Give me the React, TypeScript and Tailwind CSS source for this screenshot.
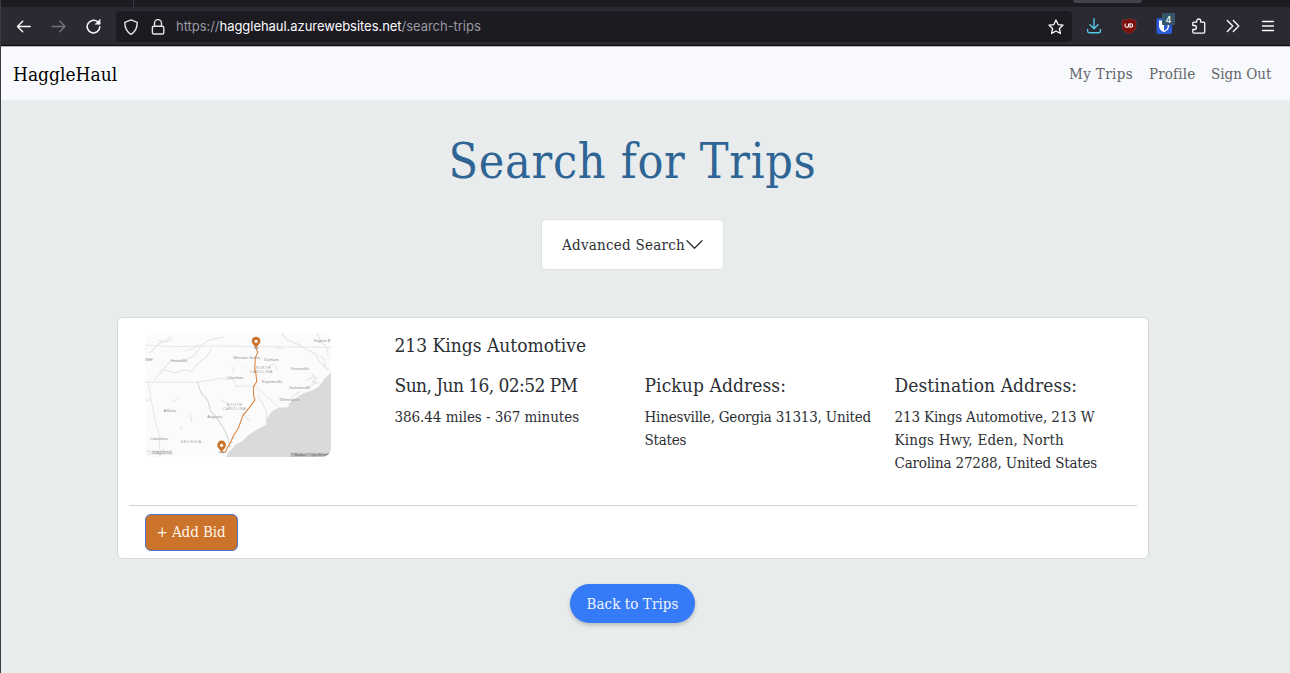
import type { ReactNode } from 'react';

function BrowserBar() {
  return (
    <header className="h-[47px] shrink-0 bg-[#2b2a33] font-['Inter','Liberation_Sans',sans-serif]">
      <div className="flex h-[7px] bg-[#1c1b22]">
        <div className="w-[133px] border-r border-[#3a3942]" />
        <div className="ml-[939px] h-[3px] w-[69px] rounded-b bg-[#42414d]" />
      </div>
      <div className="flex h-[38px] items-center">
        <svg className="ml-[15px] h-4 w-4 shrink-0" viewBox="0 0 16 16" fill="none" stroke="#fbfbfe" strokeWidth="1.4" strokeLinecap="round" strokeLinejoin="round">
          <path d="M14.2 8.500H1.500M6.700 3.300 1.500 8.500 6.700 13.700" />
        </svg>
        <svg className="ml-[19px] h-4 w-4 shrink-0" viewBox="0 0 16 16" fill="none" stroke="#76757e" strokeWidth="1.3" strokeLinecap="round" strokeLinejoin="round">
          <path d="M1 8.500h12.700M8.800 3.300 14 8.500l-5.200 5.200" />
        </svg>
        <svg className="ml-[19px] h-4 w-4 shrink-0" viewBox="0 0 16 16" fill="none" stroke="#fbfbfe" strokeWidth="1.5" strokeLinecap="round" strokeLinejoin="round">
          <path d="M13.800 8.800A6.300 6.300 0 1 1 11.700 3.900L13.500 5.600" />
          <path d="M14.100 1.500v4.800H9.300z" fill="#fbfbfe" strokeWidth=".5" />
        </svg>
        <div className="ml-[14px] mt-px flex h-[31px] w-[956px] shrink-0 items-center rounded bg-[#1c1b22]">
          <svg className="ml-[7px] h-4 w-4" viewBox="0 0 16 16" fill="none" stroke="#e6e6ea" strokeWidth="1.4" strokeLinejoin="round">
            <path d="M8 .9 14.2 3.3C14.3 8.4 12.5 12.6 8 15.3 3.5 12.6 1.7 8.4 1.8 3.3z" />
          </svg>
          <svg className="ml-[11px] h-4 w-4" viewBox="0 0 16 16" fill="none" stroke="#e6e6ea" strokeWidth="1.4" strokeLinejoin="round">
            <rect x="2.4" y="7.2" width="11.4" height="7.8" rx="1.6" />
            <path d="M4.5 7V4.1a3.5 3.5 0 0 1 7 0V7" />
          </svg>
          <span className="ml-[10px] grow whitespace-nowrap text-[13px] tracking-[-0.04px] text-[#9a99a1]">
            https://<span className="text-[#fbfbfe]">hagglehaul.azurewebsites.net</span>/search-trips
          </span>
          <svg className="mr-[8px] h-4 w-4" viewBox="0 0 16 16" fill="none" stroke="#fbfbfe" strokeWidth="1.3" strokeLinejoin="round">
            <path d="m8 1 2.1 4.6 5 .5-3.7 3.4 1 5L8 12l-4.4 2.5 1-5L.9 6.1l5-.5z" />
          </svg>
        </div>
        <svg className="ml-[14px] h-4 w-4 shrink-0" viewBox="0 0 16 16" fill="none" stroke="#54c8e8" strokeWidth="1.4" strokeLinecap="round" strokeLinejoin="round">
          <path d="M8 .8v9.8M4 6.8l4 4 4-4M1.6 11.5v1.6q0 1.6 1.6 1.6h9.6q1.6 0 1.6-1.6v-1.6" />
        </svg>
        <svg className="ml-[19px] h-4 w-4 shrink-0" viewBox="0 0 16 16" fill="none">
          <path d="M8 .3C10 1.8 12.500 2.200 15 2.200V8c0 4-3 6-7 7.800C4 14 1 12 1 8V2.200C3.500 2.200 6 1.800 8 .3z" fill="#7c0f0b" stroke="#a4504b" strokeWidth=".4" />
          <path d="M4.100 5.600v2.500q0 1.200 1.700 1.200t1.700-1.200V5.600M9 5.700v3.500h.9a1.750 1.750 0 0 0 0-3.500z" stroke="#fff" strokeWidth="1.100" />
        </svg>
        <div className="relative ml-[19px] h-4 w-4 shrink-0">
          <svg className="h-4 w-4" viewBox="0 0 16 16">
            <rect x=".5" width="15.500" height="16" rx="2" fill="#2a5bd8" />
            <path d="M3 2.500h10v5.800c0 3-2.500 4.800-5 6-2.500-1.200-5-3-5-6z" fill="#fff" />
            <path d="M8 4h3.600v4.400c0 2-1.600 3.300-3.600 4.300z" fill="#2a5bd8" />
          </svg>
          <span className="absolute -top-[5px] left-[6px] flex h-[12px] w-[13px] items-center justify-center rounded-[1px] bg-[#36576a] text-[9px] font-medium leading-none text-white">4</span>
        </div>
        <svg className="ml-[19px] h-4 w-4 shrink-0" viewBox="0 0 16 16" fill="none" stroke="#fbfbfe" strokeWidth="1.300" strokeLinejoin="round">
          <path d="M1.800 6.500V5.100q0-1 1-1h2.900V3a2 2 0 0 1 4 0v1.100h3q1 0 1 1v9q0 1-1 1H2.800q-1 0-1-1v-2.600h1.600a2 2 0 0 0 0-4H1.800z" />
        </svg>
        <svg className="ml-[18px] h-4 w-4 shrink-0" viewBox="0 0 16 16" fill="none" stroke="#fbfbfe" strokeWidth="1.300" strokeLinecap="round" strokeLinejoin="round">
          <path d="m2.300 2.500 5.500 5.500-5.500 5.500M8.300 2.500 13.800 8l-5.500 5.500" />
        </svg>
        <svg className="ml-[19px] h-4 w-4 shrink-0" viewBox="0 0 16 16" fill="none" stroke="#fbfbfe" strokeWidth="1.300" strokeLinecap="round">
          <path d="M2.500 3.500h11M2.500 8h11M2.500 12.500h11" />
        </svg>
      </div>
      <div className="h-px bg-[#0c0c0d]" />
      <div className="h-px bg-[#b9b9bd]" />
    </header>
  );
}

const places: [number, number, string][] = [
  [148, 127, 'Knoxville'],
  [350, 117, 'Winston-Salem'],
  [424, 125, 'Durham'],
  [509, 151, 'Greenville'],
  [316, 177, 'Charlotte'],
  [426, 189, 'Fayetteville'],
  [508, 209, 'Jacksonville'],
  [478, 244, 'Wilmington'],
  [120, 276, 'Atlanta'],
  [254, 295, 'Augusta'],
  [88, 361, 'Columbus'],
  [575, 66, 'Virginia B'],
  [58, 125, 'SEE'],
];

const states: [number, number, string][] = [
  [400, 147, 'NORTH'],
  [394, 160, 'CAROLINA'],
  [314, 257, 'SOUTH'],
  [314, 270, 'CAROLINA'],
  [184, 368, 'GEORGIA'],
];

function Pin({ x, y }: { x: number; y: number }) {
  return (
    <g transform={`translate(${x} ${y})`}>
      <ellipse cx="0" cy="1" rx="8" ry="3.500" fill="#888" opacity=".5" />
      <path d="M0 2C-4-7-13-11-13-20a13 13 0 0 1 26 0C13-11 4-7 0 2z" fill="#cb722b" />
      <circle cx="0" cy="-19" r="4.800" fill="#fff" />
    </g>
  );
}

function RouteMap() {
  return (
    <svg className="block h-[124px] w-[186px] rounded-[9px]" viewBox="46 40 556 371" preserveAspectRatio="none">
      <rect x="46" y="40" width="556" height="371" fill="#fbfbfb" />
      <path d="M602 158 590 170 580 180 566 200 545 212 520 220 495 236 478 250 474 262 446 263 425 275 412 294 407 315 390 324 372 334 350 350 335 365 318 373 308 385 296 396 288 411H602z" fill="#dadada" />
      <g fill="none" stroke="#dddddd" strokeWidth="2">
        <path d="M46 76 120 81 250 79 420 81 602 83M46 187H203L270 176 310 178 318 199H370L384 205 446 263M55 187 76 300 90 350 88 411" />
        <path d="M203 187 212 215 235 245 240 270 262 296 284 330 296 360 300 384" strokeWidth="3" stroke="#d2d5d5" />
      </g>
      <g fill="none" stroke="#e2e4e4" strokeWidth="3" strokeLinejoin="round">
        <path d="M60 100 90 70 110 64 125 50M74 180 95 155 125 122 170 120 195 105 213 78 240 60 280 52M100 150 140 160 162 150 186 155 205 130 230 110 245 90M165 94 190 86 205 74M85 60 108 66 130 60" />
        <path d="M305 140 312 150 308 158M345 140 350 148M436 78 450 88 460 84M415 140 430 132 442 150M455 42 470 60 500 72 530 90 555 102 570 130 590 140M530 180 550 172 556 190 530 202M480 235 510 215M270 240 290 248 300 262M215 222 232 235M335 278 350 296 362 300M120 265 112 272M132 245 148 230M180 278 186 305M384 226 410 275 408 310M150 320 160 330M48 242 62 240" />
        <path d="M570 110 585 122 580 140 595 150M545 165 560 175 545 186 565 190M560 42 575 70 590 84 594 110" />
        <path d="M297 370 310 366M296 380 306 376M300 360 318 352" />
      </g>
      <g fontFamily="Liberation Sans, sans-serif" textAnchor="middle">
        {places.map(([x, y, t]) => (
          <text key={t} x={x} y={y} fontSize="12" fill="#929292">{t}</text>
        ))}
        {states.map(([x, y, t], i) => (
          <text key={i} x={x} y={y} fontSize="10" letterSpacing="2.400" fill="#999">{t}</text>
        ))}
      </g>
      <path d="M378 84 383 98 376 114 374 145 378 165 380 185 370 202 371 230 375 240 362 258 338 288 325 325 310 348 303 365 293 382 287 395 281 398 275 396" fill="none" stroke="#d98543" strokeWidth="3.200" strokeLinejoin="round" />
      <Pin x={378} y={84} />
      <Pin x={275} y={395} />
      <circle cx="57" cy="398" r="6" fill="#fff" stroke="#bbb" strokeWidth="2" />
      <text x="67" y="403" fontFamily="Liberation Sans, sans-serif" fontSize="15.500" fontWeight="700" fill="#fff" stroke="#b0b0b0" strokeWidth="1.200">mapbox</text>
      <rect x="480" y="398" width="122" height="13" fill="#c3c3c3" />
      <text x="482" y="408.500" fontFamily="Liberation Sans, sans-serif" fontSize="10" fill="#555">© Mapbox © OpenStreetM</text>
    </svg>
  );
}

function Heading({ children, className }: { children: ReactNode; className?: string }) {
  return <h5 className={`whitespace-nowrap text-[19px] leading-6 ${className ?? ''}`}>{children}</h5>;
}

export default function App() {
  return (
    <div className="flex h-[673px] w-[1290px] flex-col overflow-hidden border-l border-[#3c3b42] bg-[#e8eced] font-['DejaVu_Serif_Condensed','DejaVu_Serif',serif] text-[15px] leading-[23px] text-[#2b2f34] [font-stretch:condensed]">
      <BrowserBar />
      <nav className="flex h-[53px] shrink-0 items-center bg-[#f8f9fc] pl-[12px] pr-[18px] pt-[2px]">
        <a className="grow text-[19px] text-black">HaggleHaul</a>
        <div className="flex gap-[15px] whitespace-nowrap text-[#62656a]">
          <a className="w-[65px] tracking-[0.36px]">My Trips</a>
          <a className="w-[47px] tracking-[0.15px]">Profile</a>
          <a className="w-[61px]">Sign Out</a>
        </div>
      </nav>
      <main className="flex flex-col items-center pr-[26px]">
        <h1 className="mt-[32px] h-[58px] whitespace-nowrap text-[48px] leading-[58px] tracking-[0.7px] text-[#2e6595]">Search for Trips</h1>
        <button className="mt-[29px] flex h-[51px] w-[183px] items-center justify-center rounded-[5px] border border-[#e0e3e5] bg-white pt-px">
          <span className="whitespace-nowrap tracking-[0.25px]">Advanced Search</span>
          <svg className="ml-px h-4 w-[17px]" viewBox="0 0 17 16" fill="none" stroke="#2b2f34" strokeWidth="1.300" strokeLinecap="round" strokeLinejoin="round">
            <path d="M1 3.800 8.500 11.300 16 3.800" />
          </svg>
        </button>
        <section className="mt-[47px] h-[242px] w-[1032px] rounded-[6px] border border-[#d5d8da] bg-white px-[11px]">
          <div className="flex h-[188px] border-b border-[#d0d2d4] pl-[16px] pt-[15px]">
            <div className="w-[250px] shrink-0">
              <RouteMap />
            </div>
            <div>
              <Heading>213 Kings Automotive</Heading>
              <div className="mt-[16px] flex">
                <div className="w-[250px]">
                  <Heading className="tracking-[-0.58px]">Sun, Jun 16, 02:52 PM</Heading>
                  <p className="mt-[9px] whitespace-nowrap tracking-[-0.05px]">386.44 miles - 367 minutes</p>
                </div>
                <div className="w-[250px]">
                  <Heading className="tracking-[0.1px]">Pickup Address:</Heading>
                  <p className="mt-[9px] whitespace-nowrap tracking-[-0.21px]">
                    Hinesville, Georgia 31313, United
                    <br />
                    States
                  </p>
                </div>
                <div className="w-[230px]">
                  <Heading className="tracking-[0.08px]">Destination Address:</Heading>
                  <p className="mt-[9px] whitespace-nowrap tracking-[-0.14px]">
                    213 Kings Automotive, 213 W
                    <br />
                    <span className="tracking-[0.22px]">Kings Hwy, Eden, North</span>
                    <br />
                    <span className="tracking-[-0.18px]">Carolina 27288, United States</span>
                  </p>
                </div>
              </div>
            </div>
          </div>
          <button className="ml-[16px] mt-[8px] flex h-[37px] w-[93px] items-center justify-center whitespace-nowrap rounded-[6px] border border-[#4a72d4] bg-[#cb722b] tracking-[-0.08px] text-[#fff5ea]">+ Add Bid</button>
        </section>
        <button className="mt-[25px] h-[39px] w-[125px] whitespace-nowrap rounded-full bg-[#357af6] pt-px tracking-[0.06px] text-[#f0f6ff] shadow-[0_2px_4px_rgba(0,0,0,0.22)]">Back to Trips</button>
      </main>
    </div>
  );
}
